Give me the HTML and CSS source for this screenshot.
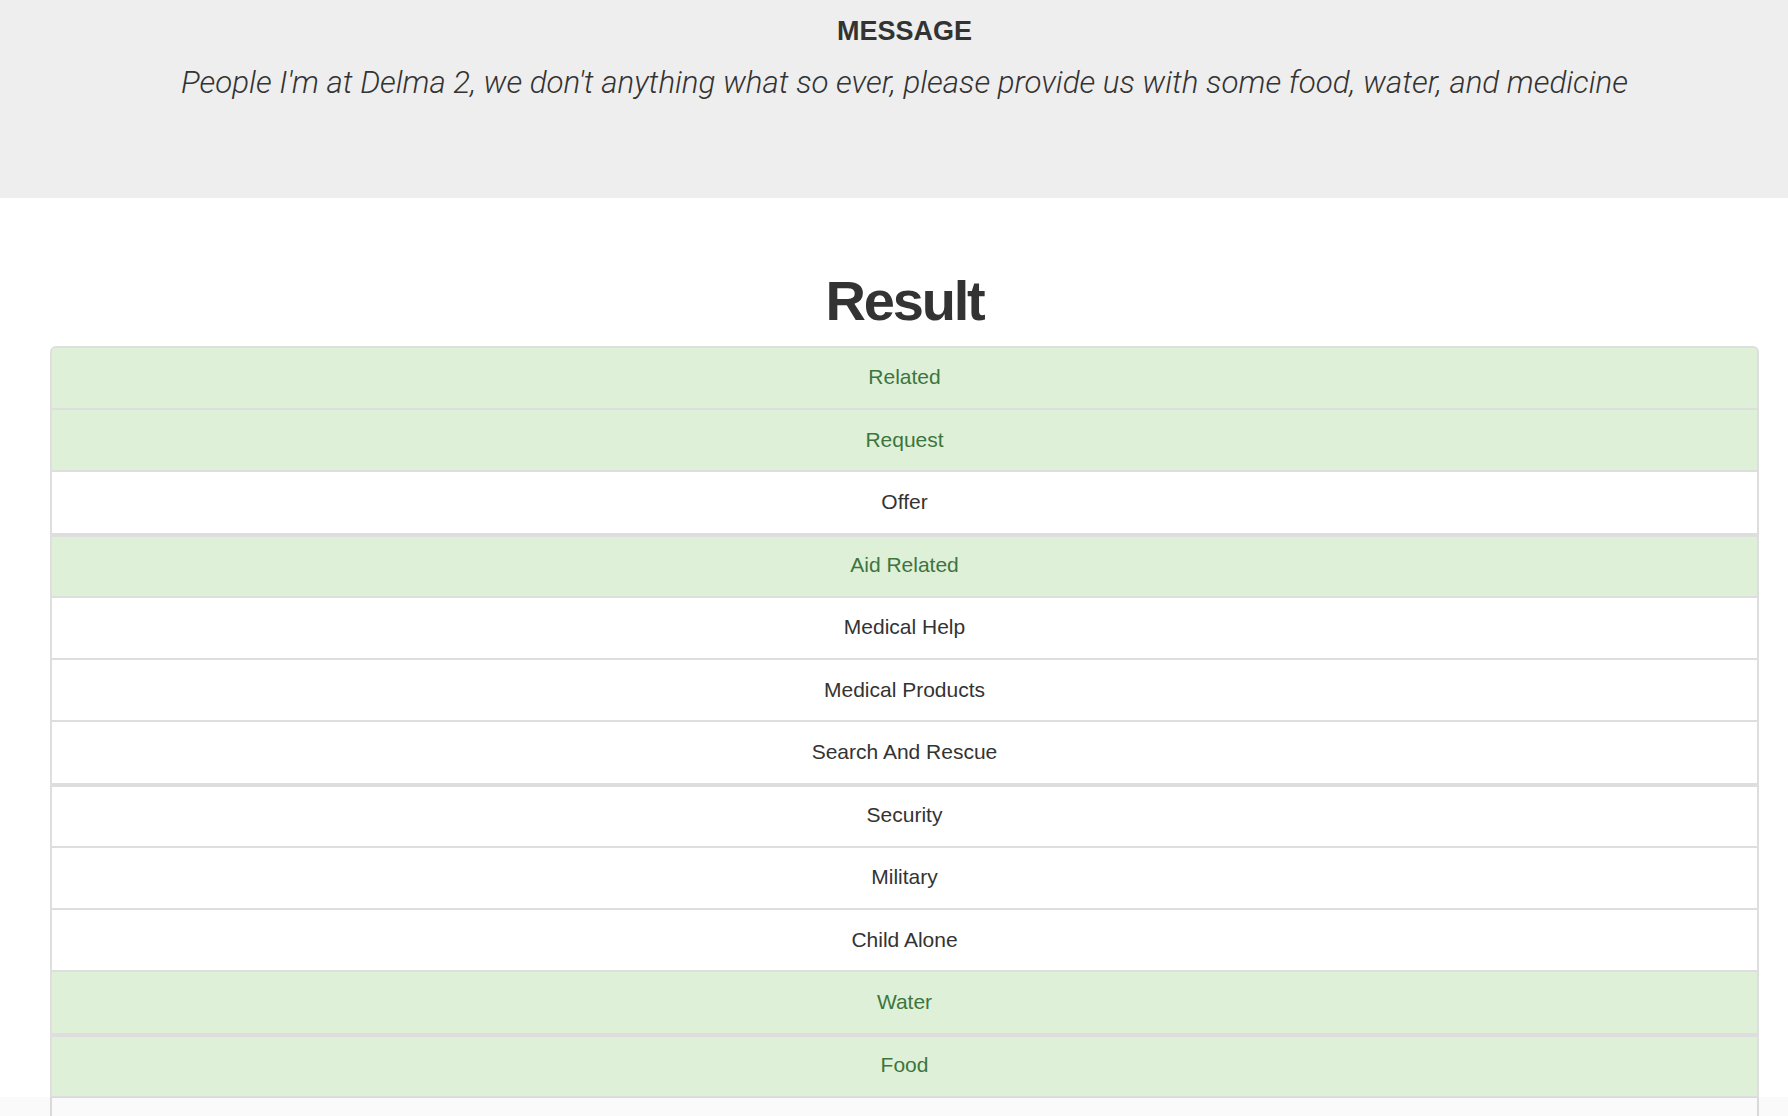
FILE: index.html
```html
<!DOCTYPE html>
<html lang="en">
<head>
<meta charset="utf-8">
<title>Disaster Response - Result</title>
<link rel="stylesheet" href="styles.css">
</head>
<body>
<div class="jumbotron">
  <div class="jumbo-inner">
    <h4 class="msg-label">MESSAGE</h4>
    <p class="msg-text">People I'm at Delma 2, we don't anything what so ever, please provide us with some food, water, and medicine</p>
  </div>
</div>
<div class="container">
  <h1 class="result-title">Result</h1>
  <ul class="list-group">
    <li class="item first success">Related</li>
    <li class="item success">Request</li>
    <li class="item">Offer</li>
    <li class="item thick success">Aid Related</li>
    <li class="item">Medical Help</li>
    <li class="item">Medical Products</li>
    <li class="item">Search And Rescue</li>
    <li class="item thick">Security</li>
    <li class="item">Military</li>
    <li class="item">Child Alone</li>
    <li class="item success">Water</li>
    <li class="item thick success">Food</li>
    <li class="item">Shelter</li>
  </ul>
</div>
<div class="bottom-fade"></div>
</body>
</html>
```
FILE: styles.css
```css
html, body {
  margin: 0;
  padding: 0;
  height: 1116px;
  overflow: hidden;
  background: #fff;
  color: #333;
  font-family: "Liberation Sans", Arial, sans-serif;
}

.jumbotron {
  background: #eeeeee;
  padding: 17px 0 92.6px;
}

.jumbo-inner {
  padding: 0 29px 0 50px;
  text-align: center;
}

.msg-label {
  margin: 0;
  font-size: 27px;
  line-height: 1.1;
  font-weight: 700;
  color: #333;
}

.msg-text {
  margin: 14.6px 0 0;
  font-family: Roboto, "Liberation Sans", sans-serif;
  font-style: italic;
  font-weight: 300;
  font-size: 31.3px;
  line-height: 1.4;
  color: #333;
}

.container {
  padding: 0 29px 0 50px;
}

.result-title {
  margin: 72.5px 0 14px;
  text-align: center;
  font-size: 56px;
  line-height: 1.1;
  font-weight: 700;
  letter-spacing: -2.2px;
  color: #333;
}

.list-group {
  list-style: none;
  margin: 0;
  padding: 0;
}

.item {
  box-sizing: border-box;
  height: 62.25px;
  padding-bottom: 1px;
  display: flex;
  align-items: center;
  justify-content: center;
  background: #fff;
  border: 2px solid #dedede;
  border-bottom: none;
  font-size: 21px;
  color: #333;
}

.item.first {
  border-top-left-radius: 6px;
  border-top-right-radius: 6px;
}

.item.thick {
  height: 63.25px;
  padding-bottom: 3px;
  border-top-width: 4px;
}

.item.success {
  background: #dff0d8;
  color: #3c763d;
}

.bottom-fade {
  position: fixed;
  left: 0;
  right: 0;
  bottom: 0;
  height: 19px;
  background: rgba(0, 0, 0, 0.018);
  pointer-events: none;
}
```
